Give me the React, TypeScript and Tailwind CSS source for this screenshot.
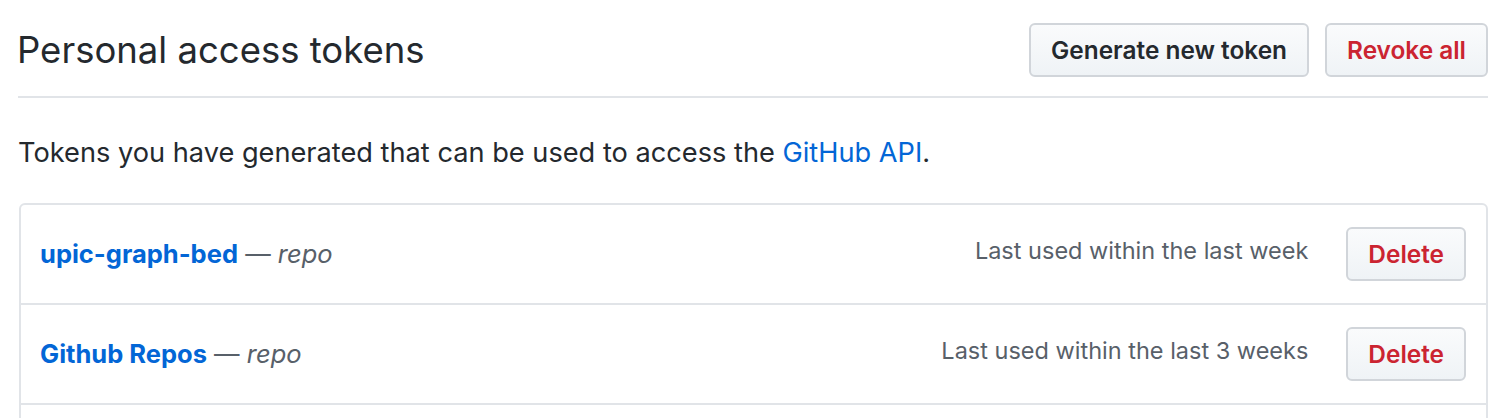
const tokens = [
  { name: 'upic-graph-bed', scope: 'repo', lastUsed: 'Last used within the last week' },
  { name: 'Github Repos', scope: 'repo', lastUsed: 'Last used within the last 3 weeks' },
];

const btn =
  'inline-flex h-[54px] items-center rounded-[6px] border-2 border-[#d1d5da] bg-gradient-to-b from-[#fafbfc] to-[#eff3f6] px-[20px] text-[24.4px] font-semibold';

export default function App() {
  return (
    <div className="min-h-screen bg-white pl-[18px] pr-[24px] text-[#24292e]" style={{ fontFamily: 'Inter, "Noto Sans", sans-serif' }}>
      <div className="flex items-center justify-between border-b-2 border-[#e1e4e8] pb-[19px] pt-[23px]">
        <h2 className="-ml-[1px] text-[36.5px] font-normal leading-none">Personal access tokens</h2>
        <div className="flex gap-[16px]">
          <button className={`${btn} text-[#24292e]`}>Generate new token</button>
          <button className={`${btn} text-[#cb2431]`}>Revoke all</button>
        </div>
      </div>

      <p className="mt-[37px] text-[27.2px] leading-[36px]">
        Tokens you have generated that can be used to access the{' '}
        <a className="text-[#0366d6]">GitHub API</a>.
      </p>

      <div className="mt-[32px] ml-px overflow-hidden rounded-t-[6px] border-2 border-[#e1e4e8]">
        {tokens.map((t) => (
          <div key={t.name} className="flex h-[100px] items-center justify-between border-b-2 border-[#e1e4e8] pl-[19px] pr-[20px]">
            <div className="text-[25.5px]">
              <a className="font-bold text-[#0366d6]">{t.name}</a>
              <span className="text-[#586069]"> — <em>{t.scope}</em></span>
            </div>
            <div className="flex items-center gap-[38px]">
              <span className="-mt-[6px] text-[23.5px] text-[#586069]">{t.lastUsed}</span>
              <button className={`${btn} text-[#cb2431]`}>Delete</button>
            </div>
          </div>
        ))}
        <div className="h-[100px]" />
      </div>
    </div>
  );
}
